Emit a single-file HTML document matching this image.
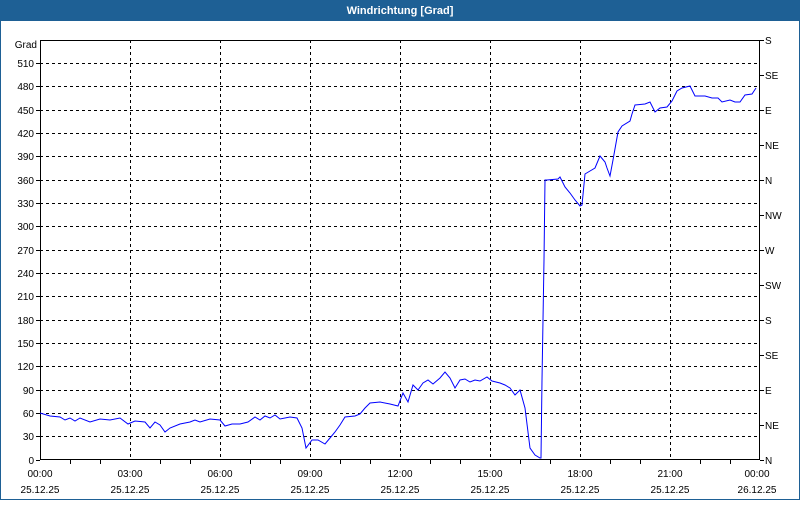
<!DOCTYPE html>
<html><head><style>
body{margin:0;width:800px;height:500px;overflow:hidden;background:#fff;font-family:"Liberation Sans",sans-serif;}
</style></head><body>
<svg width="800" height="500" xmlns="http://www.w3.org/2000/svg" font-family="Liberation Sans, sans-serif" font-size="10">
<rect x="0" y="0" width="800" height="500" fill="#fff"/>
<rect x="0.5" y="0.5" width="799" height="499" fill="none" stroke="#1e6095"/>
<rect x="0" y="0" width="800" height="21" fill="#1e6095"/>
<text x="400" y="14" fill="#fff" font-weight="bold" font-size="11" text-anchor="middle">Windrichtung [Grad]</text>
<g stroke="#000" stroke-dasharray="3,3" stroke-width="1">
<line x1="40" y1="63.5" x2="760" y2="63.5"/><line x1="40" y1="86.5" x2="760" y2="86.5"/><line x1="40" y1="110.5" x2="760" y2="110.5"/><line x1="40" y1="133.5" x2="760" y2="133.5"/><line x1="40" y1="156.5" x2="760" y2="156.5"/><line x1="40" y1="180.5" x2="760" y2="180.5"/><line x1="40" y1="203.5" x2="760" y2="203.5"/><line x1="40" y1="226.5" x2="760" y2="226.5"/><line x1="40" y1="250.5" x2="760" y2="250.5"/><line x1="40" y1="273.5" x2="760" y2="273.5"/><line x1="40" y1="296.5" x2="760" y2="296.5"/><line x1="40" y1="320.5" x2="760" y2="320.5"/><line x1="40" y1="343.5" x2="760" y2="343.5"/><line x1="40" y1="366.5" x2="760" y2="366.5"/><line x1="40" y1="390.5" x2="760" y2="390.5"/><line x1="40" y1="413.5" x2="760" y2="413.5"/><line x1="40" y1="436.5" x2="760" y2="436.5"/>
<line x1="130.5" y1="40" x2="130.5" y2="460"/><line x1="220.5" y1="40" x2="220.5" y2="460"/><line x1="310.5" y1="40" x2="310.5" y2="460"/><line x1="400.5" y1="40" x2="400.5" y2="460"/><line x1="490.5" y1="40" x2="490.5" y2="460"/><line x1="580.5" y1="40" x2="580.5" y2="460"/><line x1="670.5" y1="40" x2="670.5" y2="460"/>
</g>
<rect x="40.5" y="40.5" width="719" height="419" fill="none" stroke="#000"/>
<g stroke="#000">
<path d="M70.5 460v4M100.5 460v4M160.5 460v4M190.5 460v4M250.5 460v4M280.5 460v4M340.5 460v4M370.5 460v4M430.5 460v4M460.5 460v4M520.5 460v4M550.5 460v4M610.5 460v4M640.5 460v4M700.5 460v4M730.5 460v4"/>
<path d="M36 63.5h4M36 86.5h4M36 110.5h4M36 133.5h4M36 156.5h4M36 180.5h4M36 203.5h4M36 226.5h4M36 250.5h4M36 273.5h4M36 296.5h4M36 320.5h4M36 343.5h4M36 366.5h4M36 390.5h4M36 413.5h4M36 436.5h4M36 460.5h4"/>
<path d="M760 40.5h4M760 75.5h4M760 110.5h4M760 145.5h4M760 180.5h4M760 215.5h4M760 250.5h4M760 285.5h4M760 320.5h4M760 355.5h4M760 390.5h4M760 425.5h4M760 460.5h4"/>
</g>
<g text-anchor="end" fill="#000">
<text x="37" y="48">Grad</text>
<text x="34" y="67">510</text><text x="34" y="90">480</text><text x="34" y="114">450</text><text x="34" y="137">420</text><text x="34" y="160">390</text><text x="34" y="184">360</text><text x="34" y="207">330</text><text x="34" y="230">300</text><text x="34" y="254">270</text><text x="34" y="277">240</text><text x="34" y="300">210</text><text x="34" y="324">180</text><text x="34" y="347">150</text><text x="34" y="370">120</text><text x="34" y="394">90</text><text x="34" y="417">60</text><text x="34" y="440">30</text><text x="34" y="464">0</text>
</g>
<g fill="#000">
<text x="765" y="44">S</text><text x="765" y="79">SE</text><text x="765" y="114">E</text><text x="765" y="149">NE</text><text x="765" y="184">N</text><text x="765" y="219">NW</text><text x="765" y="254">W</text><text x="765" y="289">SW</text><text x="765" y="324">S</text><text x="765" y="359">SE</text><text x="765" y="394">E</text><text x="765" y="429">NE</text><text x="765" y="464">N</text>
</g>
<g text-anchor="middle" fill="#000">
<text x="40" y="477">00:00</text><text x="130" y="477">03:00</text><text x="220" y="477">06:00</text><text x="310" y="477">09:00</text><text x="400" y="477">12:00</text><text x="490" y="477">15:00</text><text x="580" y="477">18:00</text><text x="670" y="477">21:00</text><text x="757" y="477">00:00</text>
<text x="40" y="493">25.12.25</text><text x="130" y="493">25.12.25</text><text x="220" y="493">25.12.25</text><text x="310" y="493">25.12.25</text><text x="400" y="493">25.12.25</text><text x="490" y="493">25.12.25</text><text x="580" y="493">25.12.25</text><text x="670" y="493">25.12.25</text><text x="757" y="493">26.12.25</text>
</g>
<polyline fill="none" stroke="#0000ff" stroke-width="1" points="40,413 50,416 60,417 65,420 70,418 75,421 80,418 90,422 100,419 110,420 120,418 128,424 135,421 145,422 150,428 155,422 160,425 165,432 170,428 180,424 190,422 195,420 200,422 210,419 220,420 225,426 232,424 240,424 248,422 255,417 260,420 265,416 270,418 275,415 280,419 290,417 297,418 302,428 306,448 312,440 318,440 325,444 330,438 335,432 340,425 345,417 355,416 360,414 365,408 370,403 380,402 390,404 398,406 403,393 408,402 413,385 418,390 423,383 428,380 433,384 440,378 445,372 450,378 455,388 460,380 465,379 470,382 475,380 480,381 487,377 492,381 500,383 505,385 510,388 515,395 520,390 525,408 530,448 535,455 540,458 541,458 542,380 544,260 545,180 547,180 558,179 560,177 565,187 570,193 575,200 580,206 582,205 585,174 590,171 595,168 600,156 605,162 607,168 610,176 613,160 618,132 622,126 630,121 632,114 635,105 645,104 650,102 655,112 660,108 667,107 672,101 677,91 682,88 690,86 695,96 705,96 712,98 718,98 722,102 730,100 735,102 740,102 745,95 752,94 756,88"/>
</svg>
</body></html>
